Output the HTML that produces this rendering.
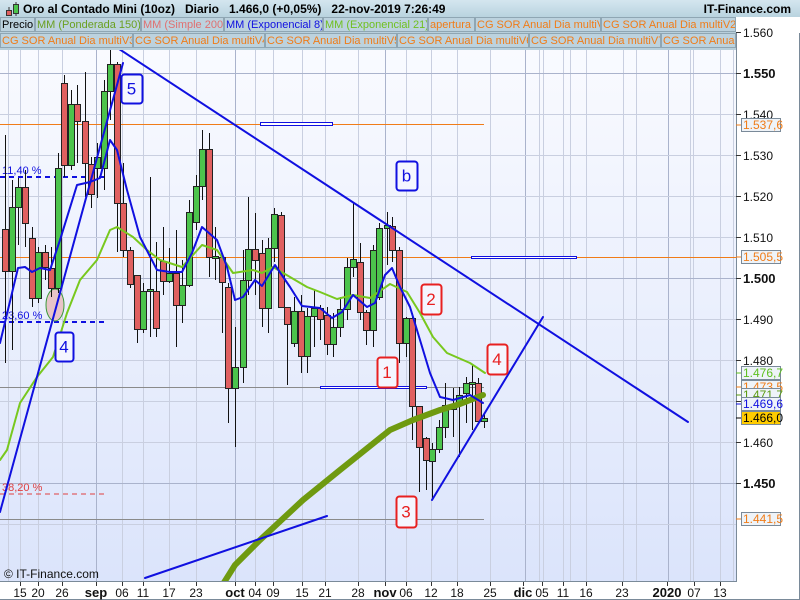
<!DOCTYPE html>
<html><head><meta charset="utf-8"><style>
html,body{margin:0;padding:0;width:800px;height:600px;overflow:hidden;background:#fff;font-family:"Liberation Sans",sans-serif}
#hdr{position:absolute;left:0;top:0;width:800px;height:17px;background:linear-gradient(#d4e6ef,#b9d3df);font-size:12px;font-weight:bold;color:#000}
#leg{position:absolute;left:0;top:17px;width:736px;height:33px;background:#b8cfdb}
.tab{position:absolute;height:15px;line-height:14px;font-size:11px;border:1px solid #8fa6b3;box-sizing:border-box;padding:0 1px;white-space:nowrap;overflow:hidden;background:#bcd2de}
.o{color:#f07c18}
svg{position:absolute;left:0;top:0}
</style></head><body>
<svg width="800" height="600" id="s">
<defs><linearGradient id="bg" x1="0" y1="0" x2="0" y2="1"><stop offset="0" stop-color="#fafbff"/><stop offset="1" stop-color="#dbe4fb"/></linearGradient></defs>
<rect x="0" y="33" width="736" height="548" fill="url(#bg)"/>
<g id="grid" stroke="#c5cbdd" stroke-width="1"></g>
<g id="ov"></g>
</svg>
<div id="hdr"><svg width="20" height="17" style="position:absolute;left:3px;top:0"><line x1="6" y1="7" x2="6" y2="16" stroke="#333"/><rect x="3.5" y="10.5" width="5" height="5" fill="#e06060" stroke="#333"/><line x1="13" y1="2" x2="13" y2="16" stroke="#333"/><rect x="10.5" y="4.5" width="5" height="9" fill="#4cc44c" stroke="#333"/></svg>
<span style="position:absolute;left:23px;top:2px">Oro al Contado Mini (10oz)&nbsp;&nbsp;&nbsp;Diario&nbsp;&nbsp;&nbsp;1.466,0 (+0,05%)&nbsp;&nbsp;&nbsp;22-nov-2019 7:26:49</span>
<span style="position:absolute;right:9px;top:2px">IT-Finance.com</span></div>
<div id="leg">
<div class="tab" style="left:0;top:0;width:35px">Precio</div>
<div class="tab" style="left:35px;top:0;width:106px;color:#6aa020">MM (Ponderada 150)</div>
<div class="tab" style="left:141px;top:0;width:83px;color:#e07070">MM (Simple 200)</div>
<div class="tab" style="left:224px;top:0;width:99px;color:#1010e0">MM (Exponencial 8)</div>
<div class="tab" style="left:323px;top:0;width:105px;color:#70c020">MM (Exponencial 21)</div>
<div class="tab o" style="left:428px;top:0;width:47px">apertura</div>
<div class="tab o" style="left:475px;top:0;width:126px">CG SOR Anual Dia multiV</div>
<div class="tab o" style="left:601px;top:0;width:135px">CG SOR Anual Dia multiV2</div>
<div class="tab o" style="left:0;top:16px;width:133px">CG SOR Anual Dia multiV3</div>
<div class="tab o" style="left:133px;top:16px;width:132px">CG SOR Anual Dia multiV4</div>
<div class="tab o" style="left:265px;top:16px;width:132px">CG SOR Anual Dia multiV5</div>
<div class="tab o" style="left:397px;top:16px;width:132px">CG SOR Anual Dia multiV6</div>
<div class="tab o" style="left:529px;top:16px;width:132px">CG SOR Anual Dia multiV7</div>
<div class="tab o" style="left:661px;top:16px;width:75px">CG SOR Anual</div>
</div>
<script>
const NS="http://www.w3.org/2000/svg";const s=document.getElementById('s');
function el(t,a,p,txt){if(typeof p==='string'){txt=p;p=null;}const e=document.createElementNS(NS,t);for(const k in a)e.setAttribute(k,a[k]);if(txt!=null)e.textContent=txt;(p||s).appendChild(e);return e}
const g=document.getElementById('grid');
const vx=[8,20,38,62,96,122,143,169,196,235,255,273,302,325,358,385,406,431,457,490,525,539,543,563,570,586,623,636,668,690,693,720,733];
vx.forEach(x=>el('line',{x1:x+.5,y1:33,x2:x+.5,y2:581,stroke:(x==96||x==235||x==385||x==525||x==668)?'#aab3cc':'#c9cfe0'},g));
for(let p=1440;p<=1560;p+=10){const y=278-(p-1500)*4.1;el('line',{x1:0,y1:Math.round(y)+.5,x2:736,y2:Math.round(y)+.5,stroke:(p%50==0)?'#aab3cc':'#c9cfe0'},g);}
el('line',{x1:0,y1:124.5,x2:484,y2:124.5,stroke:'#f07c18'});
el('line',{x1:0,y1:257.5,x2:736,y2:257.5,stroke:'#f07c18'});
el('line',{x1:0,y1:387.5,x2:484,y2:387.5,stroke:'#8a8a8a'});
el('line',{x1:0,y1:519.5,x2:484,y2:519.5,stroke:'#8a8a8a'});
el('rect',{x:260.5,y:122.5,width:72,height:3,fill:'#fff',stroke:'#1010e0'});
el('rect',{x:471.5,y:256.5,width:105,height:2,fill:'#fff',stroke:'#1010e0'});
el('rect',{x:320.5,y:386.5,width:106,height:2,fill:'#fff',stroke:'#1010e0'});
[[177,'#1010e0','11,40 %'],[322,'#1010e0','23,60 %'],[494,'#e04040','38,20 %']].forEach(d=>{el('line',{x1:0,y1:d[0],x2:106,y2:d[0],stroke:d[1],'stroke-width':d[1]=='#e04040'?1:2,'stroke-dasharray':'5,4'});el('text',{x:2,y:d[0]-3,fill:d[1],'font-size':11},d[2]);});
el('ellipse',{cx:55,cy:305,rx:9,ry:16,fill:'#e8c4c8',stroke:'#3a9a3a'});
const C=[[5,229,271,135,363,0],[12,207,271,180,350,1],[18,187,207,178,245,1],[25,187,223,170,247,0],[32,238,298,227,307,0],[38,252,298,247,303,1],[45,252,267,245,280,0],[51,268,288,247,297,0],[58,168,288,153,293,1],[64,83,165,75,177,0],[71,104,165,90,170,1],[77,104,121,85,163,0],[85,121,163,72,197,0],[91,164,194,157,208,0],[97,157,168,143,198,1],[104,91,168,80,190,1],[110,64,91,50,120,1],[117,64,203,62,252,0],[123,203,250,163,257,0],[130,250,284,247,288,0],[137,275,329,275,343,0],[143,291,329,283,333,1],[150,289,291,177,337,1],[156,291,328,242,337,0],[163,261,281,227,295,0],[169,273,281,248,283,1],[176,273,305,230,347,0],[182,285,305,260,323,1],[189,212,285,200,287,1],[196,186,222,175,230,1],[202,149,186,130,200,1],[209,149,257,133,277,0],[215,256,258,227,280,1],[222,257,282,255,333,0],[228,287,388,283,423,0],[235,367,388,327,447,1],[243,280,367,250,383,1],[248,249,280,197,295,1],[255,249,260,213,295,0],[262,253,308,240,327,0],[268,248,308,238,333,1],[274,214,248,208,262,1],[281,215,307,212,308,0],[287,307,324,307,385,0],[294,311,343,297,347,1],[301,311,356,295,373,0],[307,316,356,308,373,1],[314,308,316,290,347,1],[320,308,319,305,340,0],[327,315,344,307,355,0],[333,327,344,313,357,1],[340,309,327,297,337,1],[347,267,309,258,320,1],[353,259,267,203,277,1],[360,262,312,243,320,0],[366,312,330,310,345,0],[373,250,330,245,347,1],[379,228,297,223,300,1],[387,225,228,212,265,1],[392,226,250,217,262,0],[399,250,343,247,363,0],[406,318,343,317,357,1],[412,318,406,313,440,0],[419,406,447,406,492,0],[426,438,460,437,490,0],[432,449,461,443,500,1],[439,427,449,420,453,1],[445,405,427,383,438,1],[453,405,409,388,437,1],[459,395,405,387,457,1],[466,383,393,377,423,1],[472,382,384,365,430,1],[478,383,421,378,422,0],[484,418,421,413,428,1]];
C.forEach(c=>{const x=c[0]+.5;el('line',{x1:x,y1:c[3],x2:x,y2:c[4],stroke:'#111'});el('rect',{x:c[0]-2.5,y:c[1]+.5,width:6,height:Math.max(1,c[2]-c[1]),fill:c[5]?'#4cc44c':'#e06060',stroke:'#222','stroke-width':1});});
function pl(pts,col,w){el('polyline',{points:pts,fill:'none',stroke:col,'stroke-width':w,'stroke-linejoin':'round','stroke-linecap':'round'});}
pl('200,590 213,600 235,565 260,540 303,500 340,470 365,450 390,430 413,420 440,410 460,404 483,395','#6f9a10',6);
pl('0,460 7,450 20,403 37,377 53,357 67,313 80,280 97,260 110,230 117,227 133,237 147,250 160,260 182,267 202,245 217,250 233,273 253,270 262,273 273,267 290,277 307,287 320,292 337,299 353,295 370,298 390,284 407,292 420,313 433,337 447,353 470,363 485,373','#78c81e',2);
pl('0,343 18,268 25,267 32,272 40,268 50,270 60,240 77,185 90,182 100,178 110,140 117,150 127,190 140,237 157,270 170,272 182,272 192,253 202,227 217,240 227,267 235,300 243,297 255,280 262,286 275,265 290,287 302,306 320,308 332,318 342,312 353,295 367,307 375,303 385,275 392,268 400,287 410,307 420,340 430,373 440,397 453,400 470,395 483,403','#1010e0',2);
pl('113,45 688,422','#1010e0',2);pl('0,512 123,63','#1010e0',2);pl('145,578 327,516','#1010e0',2);pl('432,500 543,317','#1010e0',2);
function box(x,y,w,h,col,t){el('rect',{x:x+.5,y:y+.5,width:w,height:h,rx:3,fill:'#f4f6ff',stroke:col,'stroke-width':2});el('text',{x:x+w/2,y:y+h/2+6,'text-anchor':'middle','font-size':17,fill:col},t);}
box(121,74,21,29,'#1010e0','5');box(396,161,21,29,'#1010e0','b');box(55,332,18,29,'#1010e0','4');
box(421,284,20,30,'#e82020','2');box(377,357,20,30,'#e82020','1');box(487,344,20,30,'#e82020','4');box(396,496,20,31,'#e82020','3');
el('text',{x:4,y:578,'font-size':12,fill:'#111'},'© IT-Finance.com');
el('rect',{x:737,y:33,width:63,height:567,fill:'#fff'});el('rect',{x:0,y:582,width:800,height:18,fill:'#fff'});
el('line',{x1:736.5,y1:33,x2:736.5,y2:582,stroke:'#7a8a99'});el('line',{x1:0,y1:581.5,x2:737,y2:581.5,stroke:'#7a8a99'});
el('line',{x1:0,y1:599.5,x2:800,y2:599.5,stroke:'#7a8a99'});el('line',{x1:799.5,y1:33,x2:799.5,y2:600,stroke:'#7a8a99'});
for(let p=1450;p<=1560;p+=10){const y=Math.round(278-(p-1500)*4.1);el('line',{x1:736,y1:y+.5,x2:741,y2:y+.5,stroke:'#333'});const b=(p%50==0);el('text',{x:743,y:y+5,'font-size':b?13:12,'font-weight':b?'bold':'normal',fill:'#111'},'1.'+String(p).slice(1));}
function lab(y,t,col,bg){el('rect',{x:741.5,y:y+.5,width:39,height:13,fill:bg||'#eef3f8',stroke:'#7a8a99'});el('text',{x:743,y:y+11,'font-size':12,fill:col},t);el('line',{x1:736,y1:y+7,x2:741,y2:y+7,stroke:col});}
lab(118,'1.537,6','#f07c18');lab(250,'1.505,5','#f07c18');lab(380,'1.473,5','#f07c18');lab(388,'1.471,7','#5a9a10');lab(366,'1.476,7','#5ec020');lab(397,'1.469,6','#1010e0');lab(411,'1.466,0','#000','#ffcc00');lab(512,'1.441,5','#f07c18');
const xl=[[20,'15'],[38,'20'],[62,'26'],[96,'sep',1],[122,'06'],[143,'11'],[169,'17'],[196,'23'],[235,'oct',1],[255,'04'],[273,'09'],[302,'15'],[325,'21'],[358,'28'],[385,'nov',1],[406,'06'],[431,'12'],[457,'18'],[490,'25'],[523,'dic',1],[542,'05'],[563,'11'],[586,'16'],[622,'23'],[667,'2020',1],[694,'07'],[720,'13']];
xl.forEach(d=>{el('line',{x1:d[0]+.5,y1:582,x2:d[0]+.5,y2:586,stroke:'#333'});el('text',{x:d[0],y:597,'text-anchor':'middle','font-size':d[2]?13:12,'font-weight':d[2]?'bold':'normal',fill:'#111'},d[1]);});
</script>
</body></html>
